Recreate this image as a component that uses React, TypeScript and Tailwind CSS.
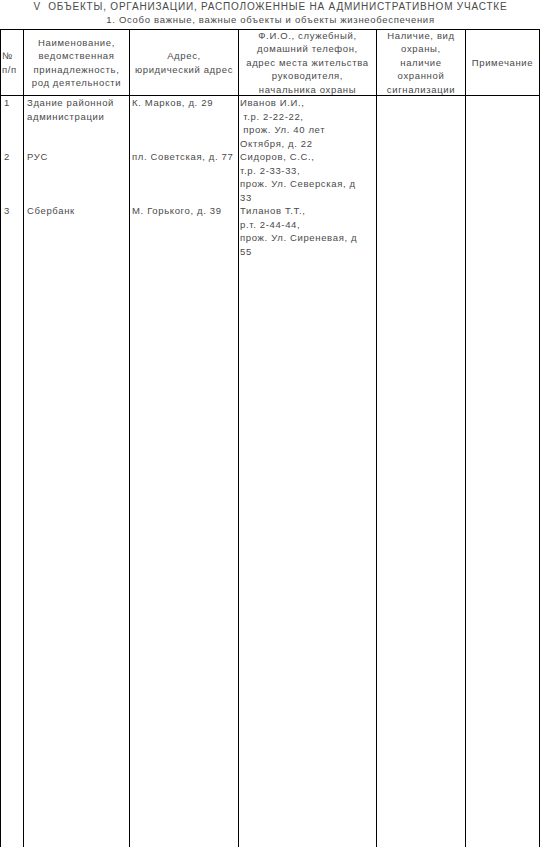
import React from "react";

const font = { fontFamily: '"Liberation Sans", Arial, sans-serif' };

const rows = [
  {
    n: "1",
    name: ["Здание районной", "администрации"],
    addr: ["К. Марков, д. 29"],
    fio: ["Иванов И.И.,", "\u00a0т.р. 2-22-22,", "\u00a0прож. Ул. 40 лет", "Октября, д. 22"],
  },
  {
    n: "2",
    name: ["РУС"],
    addr: ["пл. Советская, д. 77"],
    fio: ["Сидоров, С.С.,", "т.р. 2-33-33,", "прож. Ул. Северская, д", "33"],
  },
  {
    n: "3",
    name: ["Сбербанк"],
    addr: ["М. Горького, д. 39"],
    fio: ["Тиланов Т.Т.,", "р.т. 2-44-44,", "прож. Ул. Сиреневая, д", "55"],
  },
];

function Lines({ lines }: { lines: string[] }) {
  return (
    <>
      {lines.map((l, i) => (
        <div key={i} className="whitespace-nowrap">
          {l}
        </div>
      ))}
    </>
  );
}

export default function App() {
  const cell = "border-l border-black";
  return (
    <div className="w-[541px] h-[847px] overflow-hidden bg-white text-[#4a4a4a]" style={font}>
      <div className="text-[10px] leading-[13px] text-center tracking-[0.8px]">
        V&nbsp; ОБЪЕКТЫ, ОРГАНИЗАЦИИ, РАСПОЛОЖЕННЫЕ НА АДМИНИСТРАТИВНОМ УЧАСТКЕ
      </div>
      <div className="text-[9.5px] leading-[13px] text-center tracking-[0.7px]">
        1. Особо важные, важные объекты и объекты жизнеобеспечения
      </div>
      <div className="mt-[3px] w-[540px] border-t border-r border-black grid grid-cols-[23px_106px_109px_138px_89px_74px] text-[9.5px] leading-[13.5px] tracking-[0.65px]">
        {/* header */}
        <div className={`${cell} border-b h-[66px] flex flex-col justify-center pl-[1px]`}>
          <div>№</div>
          <div>п/п</div>
        </div>
        <div className={`${cell} border-b h-[66px] flex flex-col justify-center items-center text-center`}>
          <Lines lines={["Наименование,", "ведомственная", "принадлежность,", "род деятельности"]} />
        </div>
        <div className={`${cell} border-b h-[66px] flex flex-col justify-center items-center text-center`}>
          <Lines lines={["Адрес,", "юридический адрес"]} />
        </div>
        <div className={`${cell} border-b h-[66px] flex flex-col justify-center items-center text-center`}>
          <Lines lines={["Ф.И.О., служебный,", "домашний телефон,", "адрес места жительства", "руководителя,", "начальника охраны"]} />
        </div>
        <div className={`${cell} border-b h-[66px] flex flex-col justify-center items-center text-center`}>
          <Lines lines={["Наличие, вид", "охраны,", "наличие", "охранной", "сигнализации"]} />
        </div>
        <div className={`${cell} border-b h-[66px] flex flex-col justify-center items-center text-center`}>
          <div>Примечание</div>
        </div>
        {/* rows */}
        {rows.map((r, i) => (
          <React.Fragment key={i}>
            <div className={`${cell} pl-[3px] h-[54px]`}>{r.n}</div>
            <div className={`${cell} pl-[3px]`}>
              <Lines lines={r.name} />
            </div>
            <div className={`${cell} pl-[2px]`}>
              <Lines lines={r.addr} />
            </div>
            <div className={`${cell} pl-[1px]`}>
              <Lines lines={r.fio} />
            </div>
            <div className={cell}></div>
            <div className={cell}></div>
          </React.Fragment>
        ))}
        <div className={`${cell} h-[700px]`}></div>
        <div className={cell}></div>
        <div className={cell}></div>
        <div className={cell}></div>
        <div className={cell}></div>
        <div className={cell}></div>
      </div>
    </div>
  );
}
